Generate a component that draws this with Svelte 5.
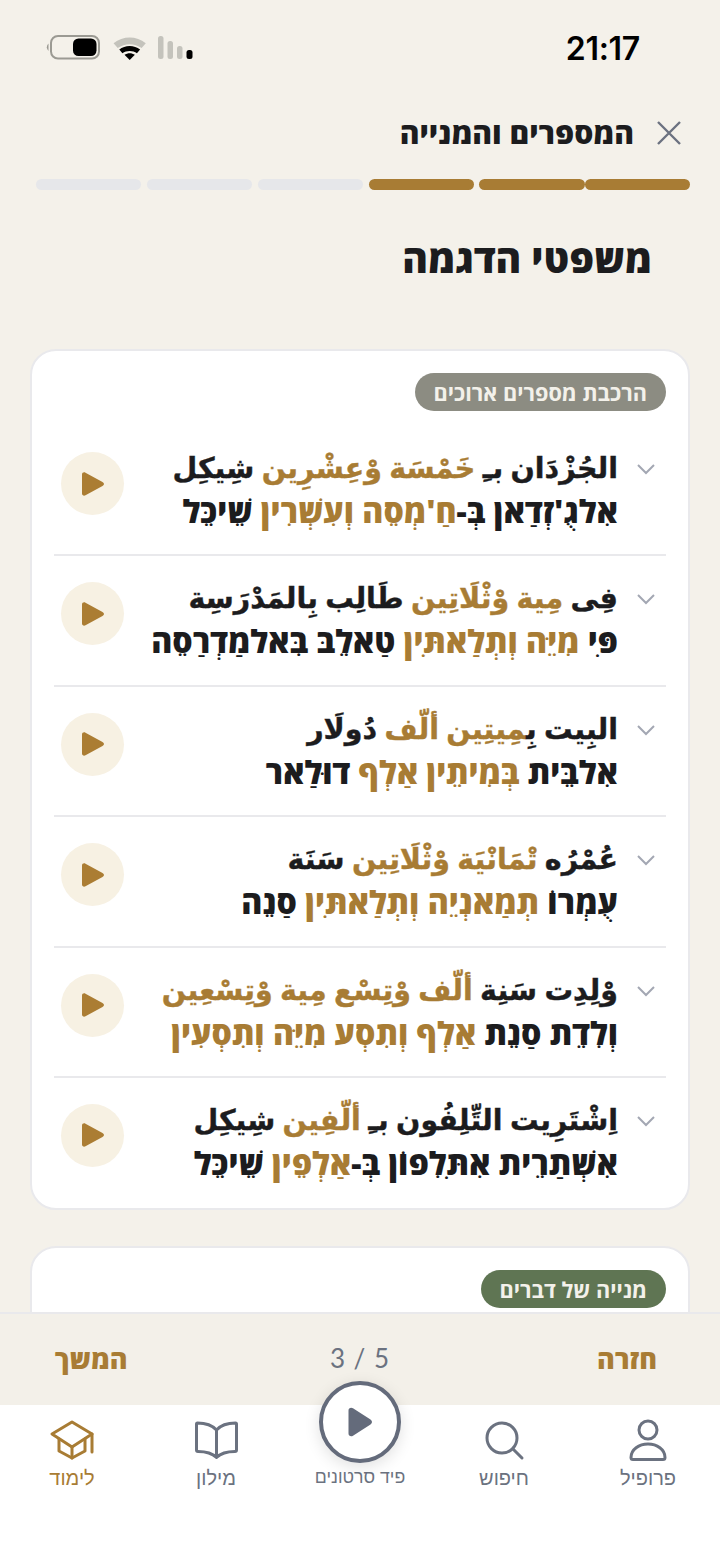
<script>
  const rows = [
    {
      ar: ['الجُزْدَان بـِ ', 'خَمْسَة وْعِشْرِين', ' شِيكِل'],
      he: ["אִלגֻ'זְדַאן בְּ-", "חַ'מְסֵה וְעִשְׁרִין", ' שֵׁיכֵּל']
    },
    {
      ar: ['فِى ', 'مِية وْثْلَاتِين', ' طَالِب بِالمَدْرَسِة'],
      he: ['פִּי ', 'מִיֵּה וְתְלַאתִּין', ' טַאלֵבּ בִּאלמַדְרַסֵה']
    },
    {
      ar: ['البِيت بِ', 'مِيتِين ألّف', ' دُولَار'],
      he: ['אִלבֵּית ', 'בְּמִיתֵין אַלְף', ' דוּלַאר']
    },
    {
      ar: ['عُمْرُه ', 'تْمَانْيَة وْثْلَاتِين', ' سَنَة'],
      he: ['עֻמְרוֹ ', 'תְמַאנְיֵה וְתְלַאתִּין', ' סַנֵה']
    },
    {
      ar: ['وْلِدِت سَنِة ', 'ألّف وْتِسْع مِية وْتِسْعِين', ''],
      he: ['וְלִדֵת סַנֵת ', 'אַלְף וְתִסְע מִיֵּה וְתִסְעִין', '']
    },
    {
      ar: ['اِشْتَرِيت التِّلِفُون بـِ ', 'ألّفِين', ' شِيكِل'],
      he: ['אִשְׁתַרֵית אִתִּלִפוֹן בְּ-', 'אַלְפֵין', ' שֵׁיכֵּל']
    }
  ];
  const segments = [true, true, true, false, false, false];
</script>

<div class="screen" dir="rtl">
  <div class="status">
    <span class="time">21:17</span>
    <svg class="status-icons" width="150" height="26" viewBox="0 0 150 26">
      <rect x="6" y="1" width="48" height="22.5" rx="7" fill="none" stroke="#9b9a93" stroke-width="2"/>
      <path d="M3.500 8.500 a5 5 0 0 0 0 7.500z" fill="#9b9a93"/>
      <rect x="28" y="3.500" width="23.500" height="17.500" rx="5.500" fill="#000"/>
      <g transform="translate(2 -1) scale(1.040)">
        <path d="M64 9 C73 1.500 86 1.500 95 9 l-4 4.500 C84 8.500 75 8.500 68 13.500z" fill="#c4c3bc"/>
        <path d="M69.500 15 C75 10.500 84 10.500 89.500 15 l-3 3.500 C82.500 15.500 76.500 15.500 72.500 18.500z" fill="#000"/>
        <path d="M74.500 20 C77.500 18 81.500 18 84.500 20 l-5 5z" fill="#000"/>
      </g>
      <g transform="translate(4 0)">
        <rect x="109" y="1" width="5.500" height="23" rx="2.500" fill="#c4c3bc"/>
        <rect x="118.500" y="6" width="5.500" height="18" rx="2.500" fill="#c4c3bc"/>
        <rect x="128" y="11" width="5.500" height="13" rx="2.500" fill="#c4c3bc"/>
        <rect x="137.500" y="15" width="6" height="9" rx="2.500" fill="#000"/>
      </g>
    </svg>
  </div>

  <header class="top">
    <svg width="26" height="26" viewBox="0 0 26 26" class="close">
      <path d="M2 2 L24 24 M24 2 L2 24" stroke="#6b7280" stroke-width="2.400" fill="none"/>
    </svg>
    <h2>המספרים והמנייה</h2>
  </header>

  <div class="progress">
    {#each segments as on, i}
      <span class="seg" class:on class:joined={i === 0}></span>
    {/each}
  </div>

  <h1>משפטי הדגמה</h1>

  <main class="scroll">
    <section class="card">
      <div class="tag grey">הרכבת מספרים ארוכים</div>
      {#each rows as row}
        <article class="row">
          <svg class="chev" width="20" height="12" viewBox="0 0 20 12">
            <path d="M2 2 L10 10 L18 2" fill="none" stroke="#a3a7b3" stroke-width="2"/>
          </svg>
          <div class="text">
            <p class="line ar" dir="rtl" lang="ar">{row.ar[0]}<span class="gold">{row.ar[1]}</span>{row.ar[2]}</p>
            <p class="line he" dir="rtl" lang="he">{row.he[0]}<span class="gold">{row.he[1]}</span>{row.he[2]}</p>
          </div>
          <button class="play" aria-label="play">
            <svg width="24" height="26" viewBox="0 0 24 26">
              <path d="M1 3.500 C1 1.500 3 .8 4.500 1.700 L21.500 11 C23.500 12 23.500 14 21.500 15 L4.500 24.300 C3 25.200 1 24.500 1 22.500z" fill="#ab7d33"/>
            </svg>
          </button>
        </article>
      {/each}
    </section>
    <section class="card second">
      <div class="tag green">מנייה של דברים</div>
    </section>
  </main>

  <div class="pager">
    <span class="link">חזרה</span>
    <span class="count" dir="ltr">3 / 5</span>
    <span class="link">המשך</span>
  </div>

  <nav class="tabs">
    <div class="tab">
      <svg width="44" height="44" viewBox="0 0 44 44" fill="none" stroke="#6b7280" stroke-width="3" stroke-linejoin="round">
        <circle cx="22" cy="12" r="9"/>
        <path d="M7 41.500 h30 a2 2 0 0 0 2-2 c0-8-8-13.500-17-13.500 s-17 5.500-17 13.500 a2 2 0 0 0 2 2z"/>
      </svg>
      <span>פרופיל</span>
    </div>
    <div class="tab">
      <svg width="44" height="44" viewBox="0 0 44 44" fill="none" stroke="#6b7280" stroke-width="3" stroke-linecap="round">
        <circle cx="20" cy="20" r="15"/>
        <path d="M31 31 L40 40"/>
      </svg>
      <span>חיפוש</span>
    </div>
    <div class="tab center">
      <div class="feed">
        <svg width="26" height="30" viewBox="0 0 26 30">
          <path d="M1.500 3.500 C1.500 1 4 0 6 1.300 L23.500 12.500 C25.500 13.800 25.500 16.200 23.500 17.500 L6 28.700 C4 30 1.500 29 1.500 26.500z" fill="#646b7b"/>
        </svg>
      </div>
      <span>פיד סרטונים</span>
    </div>
    <div class="tab">
      <svg width="44" height="44" viewBox="0 0 44 44" fill="none" stroke="#6b7280" stroke-width="3" stroke-linejoin="round">
        <path d="M22.500 12 C18 7 11 5 3.500 5 Q2.500 5 2.500 6 V32 Q2.500 33.500 4 33.500 C11 33.500 18 35 22.500 39.500 C27 35 34 33.500 41 33.500 Q42.500 33.500 42.500 32 V6 Q42.500 5 41.500 5 C34 5 27 7 22.500 12z M22.500 12 V39.500"/>
      </svg>
      <span>מילון</span>
    </div>
    <div class="tab active">
      <svg width="44" height="44" viewBox="0 0 44 44" fill="none" stroke="#a87c34" stroke-width="3" stroke-linejoin="round" stroke-linecap="round">
        <path d="M22 4 L42 16 L22 29 L2 16z"/>
        <path d="M9 21 V33 L22 40 L35 33 V21"/>
        <path d="M22 29 V40"/>
        <path d="M42 16 V34"/>
      </svg>
      <span>לימוד</span>
    </div>
  </nav>
</div>

<style>
  :global(body) {
    margin: 0;
    background: #f4f1ea;
  }
  .screen {
    width: 720px;
    height: 1558px;
    display: flex;
    flex-direction: column;
    background: #f4f1ea;
    overflow: hidden;
    font-family: "Open Sans", "Liberation Sans", "DejaVu Sans", sans-serif;
    color: #1c1c1e;
  }
  .status {
    height: 96px;
    flex: none;
    display: flex;
    align-items: flex-start;
    justify-content: space-between;
    box-sizing: border-box;
    padding: 35px 80px 0 45px;
  }
  .time {
    font-family: Inter, "Liberation Sans", sans-serif;
    font-weight: 600;
    font-size: 32px;
    line-height: 27px;
    letter-spacing: -0.3px;
    color: #000;
  }
  .status-icons {
    display: block;
  }
  .top {
    height: 74px;
    flex: none;
    display: flex;
    align-items: center;
    gap: 22px;
    box-sizing: border-box;
    padding: 0 38px 0 0;
    flex-direction: row;
  }
  .top h2 {
    margin: 0;
    font-size: 30px;
    font-weight: 800;
    line-height: 36px;
  }
  .close {
    flex: none;
  }
  .progress {
    flex: none;
    display: flex;
    gap: 5.600px;
    padding: 0 30px 0 36px;
    height: 11px;
    margin-top: 9px;
  }
  .seg {
    flex: 1;
    height: 11px;
    border-radius: 6px;
    background: #e6e7ea;
  }
  .seg.on {
    background: #a87c34;
  }
  .seg.joined {
    margin-left: -5.600px;
  }
  h1 {
    margin: 45px 68px 0 0;
    font-size: 39px;
    line-height: 46px;
    font-weight: 800;
    flex: none;
  }
  .scroll {
    flex: 1;
    min-height: 0;
    overflow: hidden;
    box-sizing: border-box;
    padding: 68px 30px 0 30px;
    display: flex;
    flex-direction: column;
    gap: 36px;
  }
  .card {
    flex: none;
    background: #fff;
    border: 2px solid #e9e9ec;
    border-radius: 26px;
    box-sizing: border-box;
    padding: 22px 22px 0;
  }
  .card.second {
    height: 200px;
  }
  .tag {
    width: fit-content;
    height: 38px;
    border-radius: 19px;
    padding: 0 19px;
    display: flex;
    align-items: center;
    font-size: 21.700px;
    font-weight: 700;
    color: #f3f1ea;
  }
  .tag.grey {
    background: #8c8c82;
  }
  .tag.green {
    background: #5f7553;
  }
  .row {
    display: flex;
    align-items: flex-start;
    height: 130.400px;
    box-sizing: border-box;
    padding: 20px 10px 0 7px;
    border-bottom: 2px solid #e9e9ec;
  }
  .row:first-of-type {
    margin-top: 15px;
  }
  .row:last-child {
    border-bottom: none;
  }
  .chev {
    flex: none;
    margin: 17px 0 0 18px;
  }
  .text {
    flex: 1;
    min-width: 0;
  }
  .line {
    margin: 0;
    font-weight: 700;
    line-height: 43px;
    white-space: nowrap;
    text-align: start;
  }
  .line.ar {
    font-size: 28.500px;
    -webkit-text-stroke: 0.4px currentColor;
  }
  .line.he {
    font-size: 32px;
    font-weight: 800;
  }
  .gold {
    color: #a87c34;
  }
  .play {
    flex: none;
    width: 63px;
    height: 63px;
    margin-top: 6px;
    padding: 0;
    border: none;
    border-radius: 50%;
    background: #f7f1e3;
    display: flex;
    align-items: center;
    justify-content: center;
  }
  .pager {
    flex: none;
    height: 93px;
    box-sizing: border-box;
    border-top: 2px solid #e9e9ec;
    background: #f3f0e9;
    display: flex;
    align-items: center;
    justify-content: space-between;
    padding: 0 63px 3px 55px;
    position: relative;
  }
  .link {
    font-size: 27px;
    font-weight: 800;
    color: #a87c34;
  }
  .count {
    position: absolute;
    left: 0;
    right: 0;
    text-align: center;
    font-family: Lato, "Liberation Sans", sans-serif;
    font-size: 26px;
    letter-spacing: 1px;
    color: #6b7280;
  }
  .tabs {
    flex: none;
    height: 153px;
    background: #fff;
    display: grid;
    grid-template-columns: repeat(5, 144px);
    position: relative;
  }
  .tab {
    display: flex;
    flex-direction: column;
    align-items: center;
    padding-top: 13px;
    font-size: 20px;
    font-family: "Liberation Sans", "Open Sans", sans-serif;
    color: #6b7280;
    line-height: 26px;
  }
  .tab span {
    margin-top: 3px;
  }
  .tab.active {
    color: #a87c34;
  }
  .tab.center {
    position: relative;
    padding-top: 56px;
    font-size: 17.700px;
  }
  .feed {
    position: absolute;
    left: 31px;
    top: -24px;
    width: 82px;
    height: 82px;
    box-sizing: border-box;
    border: 4px solid #646b7b;
    border-radius: 50%;
    background: #fff;
    box-shadow: 0 4px 16px rgba(0, 0, 0, 0.12);
    display: flex;
    align-items: center;
    justify-content: center;
  }
</style>
